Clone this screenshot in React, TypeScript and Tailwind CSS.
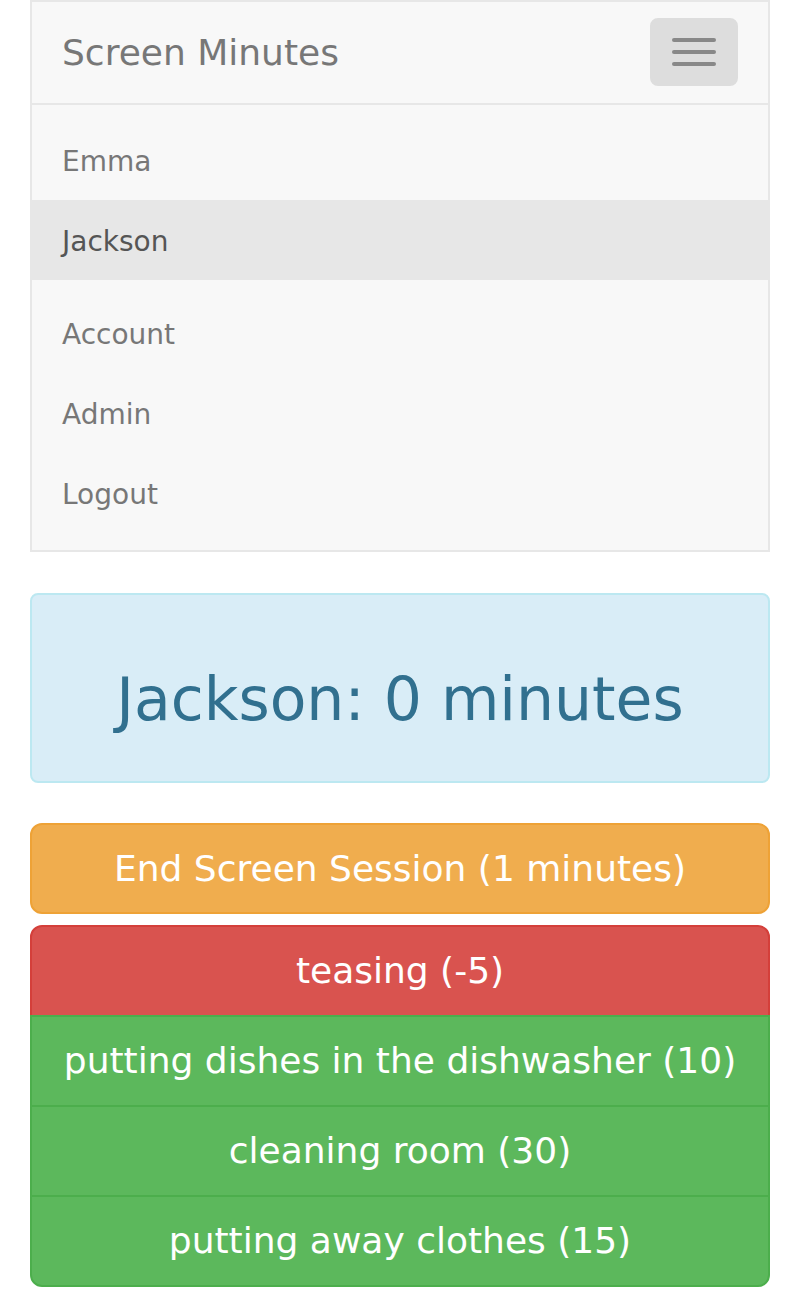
import React from "react";

export default function App() {
  const font = { fontFamily: '"DejaVu Sans", "Liberation Sans", sans-serif' };
  const item = "flex h-[80px] items-center pl-[30px] pt-[4px] text-[28px] leading-[40px]";
  return (
    <div className="min-h-[1312px] bg-white px-[30px]" style={font}>
      <nav className="mb-[41px] border-2 border-[#e7e7e7] bg-[#f8f8f8]">
        <div className="flex h-[101px] items-center justify-between pl-[30px] pr-[30px]">
          <span className="text-[36px] leading-[40px] text-[#777]">Screen Minutes</span>
          <button className="mb-[2px] flex h-[68px] w-[88px] flex-col items-center justify-center gap-[8px] rounded-[8px] border-2 border-[#ddd] bg-[#ddd]">
            <span className="block h-[4px] w-[44px] rounded-[2px] bg-[#888]" />
            <span className="block h-[4px] w-[44px] rounded-[2px] bg-[#888]" />
            <span className="block h-[4px] w-[44px] rounded-[2px] bg-[#888]" />
          </button>
        </div>
        <div className="border-t-2 border-[#e7e7e7]">
          <ul className="pt-[15px] pb-[13px]">
            <li className={`${item} text-[#777]`}>Emma</li>
            <li className={`${item} bg-[#e7e7e7] text-[#555]`}>Jackson</li>
          </ul>
          <ul className="pb-[17px]">
            <li className={`${item} text-[#777]`}>Account</li>
            <li className={`${item} text-[#777]`}>Admin</li>
            <li className={`${item} text-[#777]`}>Logout</li>
          </ul>
        </div>
      </nav>

      <div className="mb-[40px] rounded-[8px] border-2 border-[#bce8f1] bg-[#d9edf7] px-[30px] pt-[71px] pb-[49px] text-center">
        <h2 className="text-[60px] leading-[66px] text-[#31708f]">Jackson: 0 minutes</h2>
      </div>

      <button className="block h-[91px] w-full rounded-[12px] border-2 border-[#eea236] bg-[#f0ad4e] text-center text-[36px] leading-[48px] text-white">
        End Screen Session (1 minutes)
      </button>

      <div className="mt-[11px] flex flex-col">
        <button className="block h-[92px] w-full rounded-t-[12px] border-2 border-[#d43f3a] bg-[#d9534f] text-center text-[36px] leading-[48px] text-white">
          teasing (-5)
        </button>
        <button className="-mt-[2px] block h-[92px] w-full border-2 border-[#4cae4c] bg-[#5cb85c] text-center text-[36px] leading-[48px] text-white">
          putting dishes in the dishwasher (10)
        </button>
        <button className="-mt-[2px] block h-[92px] w-full border-2 border-[#4cae4c] bg-[#5cb85c] text-center text-[36px] leading-[48px] text-white">
          cleaning room (30)
        </button>
        <button className="-mt-[2px] block h-[92px] w-full rounded-b-[12px] border-2 border-[#4cae4c] bg-[#5cb85c] text-center text-[36px] leading-[48px] text-white">
          putting away clothes (15)
        </button>
      </div>
    </div>
  );
}
